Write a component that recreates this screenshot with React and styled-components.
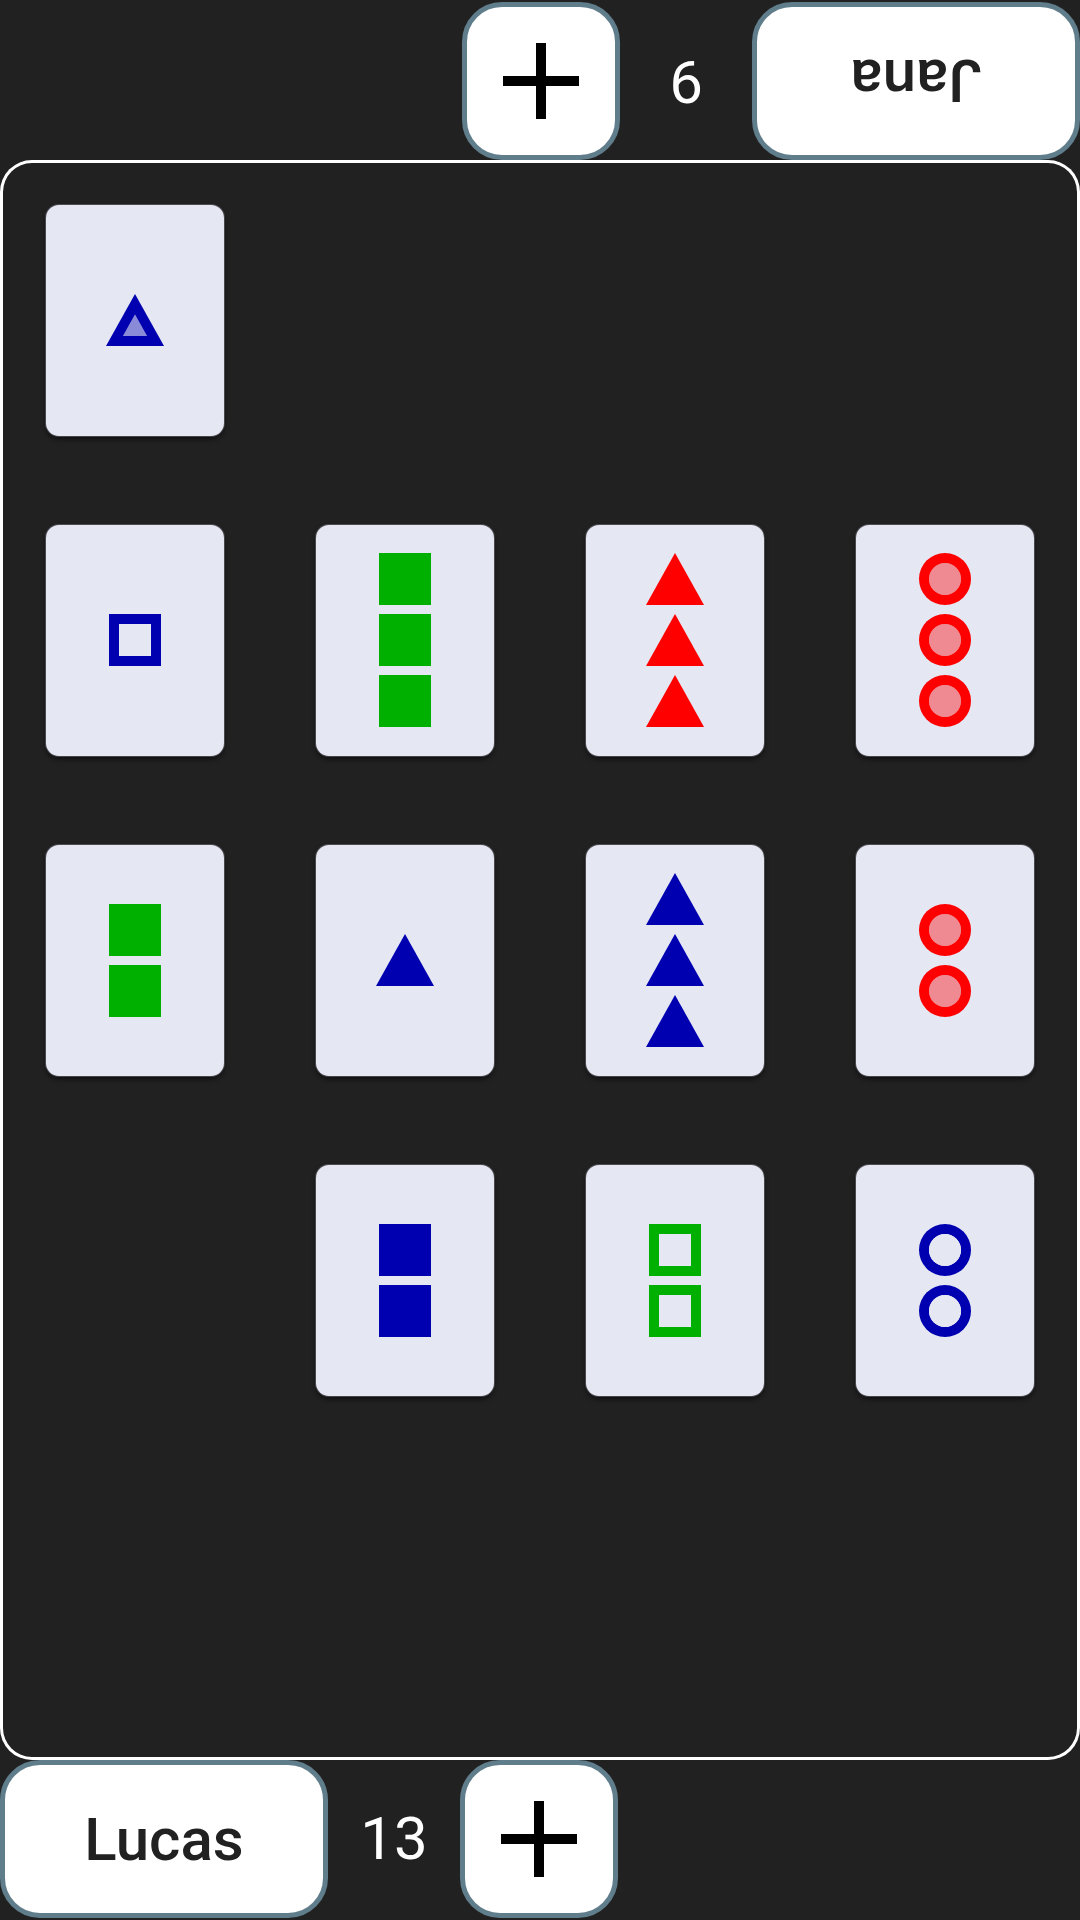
import React from 'react'
import styled, { createGlobalStyle } from 'styled-components'

const red = '#ff0000'
const green = '#00b000'
const blue = '#0000b0'
const cardBg = '#e5e7f3'

const GlobalStyle = createGlobalStyle`
  body {
    margin: 0;
    background: #212121;
    font-family: Roboto, "Liberation Sans", sans-serif;
  }
`;

const Page = styled.div`
  display: flex;
  flex-direction: column;
  width: 1080px;
  height: 1920px;
  background: #212121;
`;

const PlayerBar = styled.div`
  display: flex;
  align-items: flex-start;
  height: 160px;
  flex-shrink: 0;
  transform: ${props => (props.$flipped ? 'rotate(180deg)' : 'none')};
`;

const PanelButton = styled.button`
  box-sizing: border-box;
  height: 158px;
  width: ${props => props.$width}px;
  border: 5px solid #607d8b;
  border-radius: 40px;
  background: #ffffff;
  display: flex;
  align-items: center;
  justify-content: center;
  padding: 0;
  font-family: Roboto, "Liberation Sans", sans-serif;
  font-size: 60px;
  font-weight: 500;
  color: #212121;
`;

const Score = styled.div`
  width: 132px;
  height: 158px;
  line-height: 158px;
  text-align: center;
  color: #ffffff;
  font-size: 60px;
  font-weight: 400;
`;

const Board = styled.div`
  height: 1600px;
  flex-shrink: 0;
  border-radius: 32px;
  box-shadow: inset 0 0 0 3px #ffffff;
  display: grid;
  grid-template-columns: repeat(4, 1fr);
  grid-template-rows: repeat(5, 1fr);
`;

const Cell = styled.div`
  display: flex;
  align-items: center;
  justify-content: center;
`;

const Card = styled.div`
  width: 178px;
  height: 231px;
  border-radius: 13px;
  background: ${cardBg};
  box-shadow: 0 0 0 1px rgba(120, 120, 130, 0.5), 0 3px 5px rgba(0, 0, 0, 0.6);
  display: flex;
  flex-direction: column;
  align-items: center;
  justify-content: center;
  gap: 9px;
`;

function PlusIcon() {
  return (
    <svg width="76" height="76" viewBox="0 0 76 76">
      <rect x="33" y="0" width="10" height="76" fill="#000" />
      <rect x="0" y="33" width="76" height="10" fill="#000" />
    </svg>
  )
}

function Shape({ shape, color, fill }) {
  const inner = fill === 'open' ? cardBg : color
  const innerOpacity = fill === 'striped' ? 0.4 : 1
  if (shape === 'triangle') {
    return (
      <svg width="58" height="52" viewBox="0 0 58 52">
        <polygon points="29,0 58,52 0,52" fill={color} />
        {fill !== 'solid' && (
          <>
            <polygon points="29,20.5 41,42 17,42" fill={cardBg} />
            <polygon points="29,20.5 41,42 17,42" fill={inner} fillOpacity={innerOpacity} />
          </>
        )}
      </svg>
    )
  }
  if (shape === 'circle') {
    return (
      <svg width="52" height="52" viewBox="0 0 52 52">
        <circle cx="26" cy="26" r="26" fill={color} />
        {fill !== 'solid' && (
          <>
            <circle cx="26" cy="26" r="16" fill={cardBg} />
            <circle cx="26" cy="26" r="16" fill={inner} fillOpacity={innerOpacity} />
          </>
        )}
      </svg>
    )
  }
  return (
    <svg width="52" height="52" viewBox="0 0 52 52">
      <rect x="0" y="0" width="52" height="52" fill={color} />
      {fill !== 'solid' && (
        <>
          <rect x="10" y="10" width="32" height="32" fill={cardBg} />
          <rect x="10" y="10" width="32" height="32" fill={inner} fillOpacity={innerOpacity} />
        </>
      )}
    </svg>
  )
}

const cards = [
  { count: 1, shape: 'triangle', color: blue, fill: 'striped' }, null, null, null,
  { count: 1, shape: 'square', color: blue, fill: 'open' },
  { count: 3, shape: 'square', color: green, fill: 'solid' },
  { count: 3, shape: 'triangle', color: red, fill: 'solid' },
  { count: 3, shape: 'circle', color: red, fill: 'striped' },
  { count: 2, shape: 'square', color: green, fill: 'solid' },
  { count: 1, shape: 'triangle', color: blue, fill: 'solid' },
  { count: 3, shape: 'triangle', color: blue, fill: 'solid' },
  { count: 2, shape: 'circle', color: red, fill: 'striped' },
  null,
  { count: 2, shape: 'square', color: blue, fill: 'solid' },
  { count: 2, shape: 'square', color: green, fill: 'open' },
  { count: 2, shape: 'circle', color: blue, fill: 'open' },
  null, null, null, null,
]

function Player({ name, score, flipped }) {
  return (
    <PlayerBar $flipped={flipped}>
      <PanelButton $width={328}>{name}</PanelButton>
      <Score>{score}</Score>
      <PanelButton $width={158}><PlusIcon /></PanelButton>
    </PlayerBar>
  )
}

export default function App() {
  return (
    <Page>
      <GlobalStyle />
      <Player name="Jana" score={9} flipped />
      <Board>
        {cards.map((card, i) => (
          <Cell key={i}>
            {card && (
              <Card>
                {Array.from({ length: card.count }).map((_, j) => (
                  <Shape key={j} shape={card.shape} color={card.color} fill={card.fill} />
                ))}
              </Card>
            )}
          </Cell>
        ))}
      </Board>
      <Player name="Lucas" score={13} />
    </Page>
  )
}
